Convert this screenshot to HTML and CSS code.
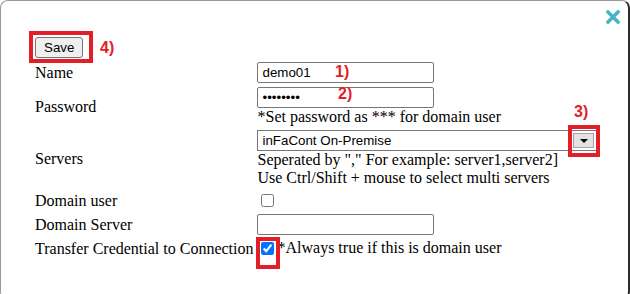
FILE: index.html
```html
<!DOCTYPE html>
<html lang="en">
<head>
    <meta charset="UTF-8">
    <title>Edit Connection User</title>
    <link rel="stylesheet" href="styles.css">
</head>
<body>
    <div class="dialog">
        <div class="dialog-bar">
            <svg class="close-icon" width="14" height="14" viewBox="0 0 14 14">
                <path d="M2 2 L12 12 M12 2 L2 12" stroke="#45b5c6" stroke-width="3.6" stroke-linecap="square"/>
            </svg>
        </div>

        <table class="form-table">
            <tr>
                <td colspan="2"><button type="button" class="save-btn">Save</button></td>
            </tr>
            <tr>
                <td class="label">Name</td>
                <td><input class="text-input" type="text" value="demo01"></td>
            </tr>
            <tr>
                <td class="label">Password</td>
                <td>
                    <input class="text-input" type="password" value="demo0123">
                    <div class="hint">*Set password as *** for domain user</div>
                </td>
            </tr>
            <tr>
                <td class="label">Servers</td>
                <td>
                    <div class="server-select">
                        <div class="server-option">inFaCont On-Premise</div>
                        <div class="server-scroll"><span class="scroll-btn"><span class="arrow-down"></span></span></div>
                    </div>
                    <div class="hint">Seperated by "," For example: server1,server2]</div>
                    <div class="hint">Use Ctrl/Shift + mouse to select multi servers</div>
                </td>
            </tr>
            <tr>
                <td class="label">Domain user</td>
                <td><input type="checkbox"></td>
            </tr>
            <tr>
                <td class="label">Domain Server</td>
                <td><input class="text-input" type="text"></td>
            </tr>
            <tr>
                <td class="label">Transfer Credential to Connection</td>
                <td><input type="checkbox" checked>*Always true if this is domain user</td>
            </tr>
        </table>

        <!-- annotation marks -->
        <div class="mark-box mark-save"></div>
        <div class="mark-box mark-servers"></div>
        <div class="mark-box mark-transfer"></div>
        <span class="mark-num num-1">1)</span>
        <span class="mark-num num-2">2)</span>
        <span class="mark-num num-3">3)</span>
        <span class="mark-num num-4">4)</span>
    </div>
</body>
</html>
```

FILE: styles.css
```css
:root {
    --mark-color: #e41e26;
    --input-border: #767676;
}

* {
    box-sizing: border-box;
}

body {
    margin: 0;
    font-family: "Liberation Serif", serif;
    font-size: 16px;
    color: #000;
    background: #fff;
}

.dialog {
    position: relative;
    width: 630px;
    height: 300px;
    border: 1px solid #9a9a9a;
    border-right: 2px solid #2b2b2b;
    border-radius: 8px;
    padding: 9px 8px 0 31px;
}

.dialog-bar {
    display: flex;
    justify-content: flex-end;
    height: 24px;
}

.close-icon {
    display: block;
}

.form-table {
    border-spacing: 2px;
}

.form-table td {
    padding: 1px;
    vertical-align: middle;
}

.label {
    white-space: nowrap;
}

.save-btn {
    font-family: "Liberation Sans", sans-serif;
    font-size: 13.33px;
    height: 21px;
    padding: 1px 8px;
    background: #efefef;
    border: 1px solid var(--input-border);
    border-radius: 3px;
    color: #000;
}

.text-input {
    display: block;
    width: 177px;
    height: 21px;
    padding: 1px 4px;
    border: 1px solid var(--input-border);
    border-radius: 2px;
    font-family: "Liberation Sans", sans-serif;
    font-size: 13.33px;
    color: #000;
}

.hint {
    line-height: 18px;
}

.server-select {
    display: flex;
    width: 340px;
    height: 21px;
    border: 1px solid var(--input-border);
    font-family: "Liberation Sans", sans-serif;
    font-size: 13.33px;
}

.server-option {
    flex: 1;
    padding: 1px 4px;
    line-height: 17px;
}

.server-scroll {
    width: 25px;
    display: flex;
    align-items: center;
    justify-content: center;
    background: #fff;
}

.scroll-btn {
    display: flex;
    align-items: center;
    justify-content: center;
    width: 21px;
    height: 15px;
    background: #e3e3e3;
    border: 1px solid #a3a3a3;
}

.arrow-down {
    width: 0;
    height: 0;
    border-left: 4px solid transparent;
    border-right: 4px solid transparent;
    border-top: 4px solid #000;
}

.form-table input[type="checkbox"] {
    width: 13px;
    height: 13px;
    margin: 3px 3px 3px 4px;
    vertical-align: -2px;
}

/* red annotation marks over the form */
.mark-box {
    position: absolute;
    border: 4px solid var(--mark-color);
}

.mark-save {
    left: 28px;
    top: 30px;
    width: 64px;
    height: 32px;
}

.mark-servers {
    left: 567px;
    top: 124px;
    width: 32px;
    height: 32px;
}

.mark-transfer {
    left: 255px;
    top: 236px;
    width: 24px;
    height: 32px;
}

.mark-num {
    position: absolute;
    font-family: "Liberation Sans", sans-serif;
    font-weight: bold;
    font-size: 16px;
    line-height: 18px;
    color: var(--mark-color);
}

.num-1 { left: 334px; top: 62px; }
.num-2 { left: 337px; top: 84px; }
.num-3 { left: 573px; top: 102px; }
.num-4 { left: 99px; top: 38px; }
```
